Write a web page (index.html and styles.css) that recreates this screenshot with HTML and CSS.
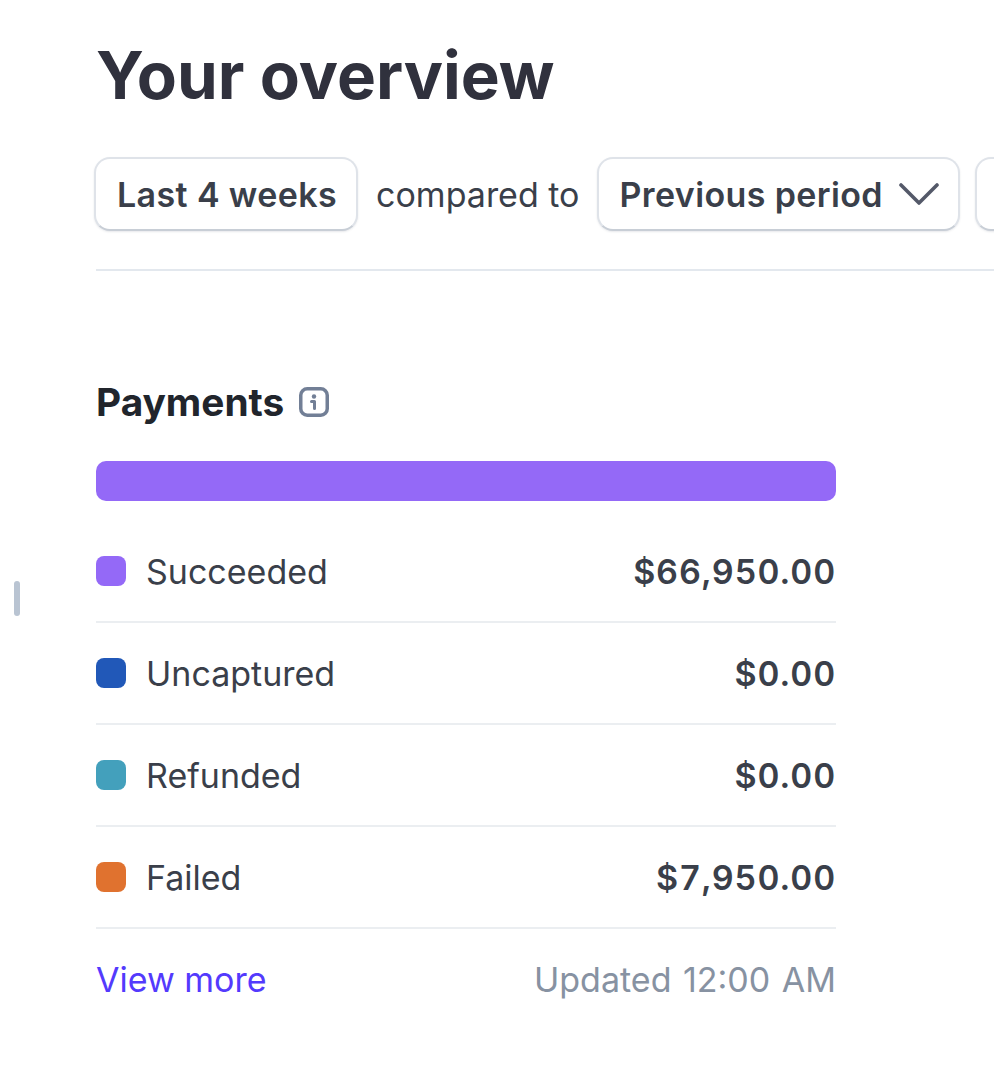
FILE: index.html
```html
<!DOCTYPE html>
<html lang="en">
<head>
<meta charset="utf-8">
<title>Your overview</title>
<link rel="stylesheet" href="styles.css">
</head>
<body>
<div class="handle"></div>
<main class="page">
  <h1 class="title">Your overview</h1>
  <div class="filters">
    <button class="pill">Last 4 weeks</button>
    <span class="compare">compared to</span>
    <button class="pill">Previous period
      <svg class="chev" width="40" height="24" viewBox="0 0 40 24" aria-hidden="true"><path d="M2 3 L20 21 L38 3" fill="none" stroke="#545969" stroke-width="3.6" stroke-linecap="round" stroke-linejoin="round"/></svg>
    </button>
    <div class="pill pill-cut"></div>
  </div>
  <section class="card">
    <h2 class="card-title">Payments
      <svg class="info" width="30" height="30" viewBox="0 0 30 30" aria-hidden="true"><rect x="1.75" y="1.75" width="26.5" height="26.5" rx="6.5" fill="none" stroke="#727f96" stroke-width="3.5"/><circle cx="15" cy="9.5" r="2.2" fill="#727f96"/><path d="M12.5 14.5 H15.5 V21.5" fill="none" stroke="#727f96" stroke-width="3" stroke-linecap="round" stroke-linejoin="round"/></svg>
    </h2>
    <div class="bar"></div>
    <ul class="rows">
      <li class="row"><span class="dot dot-purple"></span><span class="label">Succeeded</span><span class="amount">$66,950.00</span></li>
      <li class="row"><span class="dot dot-blue"></span><span class="label">Uncaptured</span><span class="amount">$0.00</span></li>
      <li class="row"><span class="dot dot-teal"></span><span class="label">Refunded</span><span class="amount">$0.00</span></li>
      <li class="row"><span class="dot dot-orange"></span><span class="label">Failed</span><span class="amount">$7,950.00</span></li>
    </ul>
    <div class="foot"><a class="more" href="#">View more</a><span class="updated">Updated 12:00 AM</span></div>
  </section>
</main>
</body>
</html>
```
FILE: styles.css
```css
* { box-sizing: border-box; }
html, body { margin: 0; height: 100%; background: #fff; overflow: hidden; }
body { font-family: Inter, "Liberation Sans", sans-serif; color: #3a3f4a; position: relative; }
.handle { position: absolute; left: 14px; top: 581px; width: 6px; height: 35px; border-radius: 3px; background: #b9c4d2; }
.page { padding: 38px 0 0 96px; }
.title { margin: 0; font-size: 65.5px; line-height: 76px; font-weight: 700; color: #30313d; }
.filters { display: flex; align-items: center; margin-top: 43px; padding-bottom: 38px; border-bottom: 2px solid #e3e8ee; white-space: nowrap; }
.pill { display: flex; align-items: center; gap: 16px; height: 74px; margin-left: -2px; padding: 0 19px 0 21px; background: #fff; border: 2px solid #dfe3e9; border-bottom-color: #c8ced6; border-radius: 16px; font: 600 34px Inter, sans-serif; letter-spacing: .38px; color: #3a3f4a; box-shadow: 0 1px 2px rgba(60,66,87,.12); flex: none; }
.compare { font-size: 34px; margin: 0 17px 0 18px; }
.pill + .compare + .pill { margin-left: 0; }
.pill-cut { margin-left: 15px; width: 60px; }
.chev { display: block; }
.card { width: 740px; margin-top: 109px; }
.card-title { display: flex; align-items: center; gap: 15px; margin: 0; font-size: 38.8px; line-height: 44px; font-weight: 700; color: #21252c; }
.bar { height: 40px; margin-top: 37px; background: #9469f7; border-radius: 10px; }
.rows { list-style: none; margin: 20px 0 0; padding: 0; }
.row { display: flex; align-items: center; height: 102px; border-bottom: 2px solid #ebeef1; font-size: 34px; }
.dot { width: 30px; height: 30px; border-radius: 8px; margin-right: 20px; flex: none; }
.dot-purple { background: #9469f7; }
.dot-blue { background: #2158b8; }
.dot-teal { background: #43a0bc; }
.dot-orange { background: #e0722f; }
.label { flex: 1; }
.amount { font-weight: 600; font-variant-numeric: tabular-nums; letter-spacing: .85px; }
.foot { display: flex; justify-content: space-between; align-items: center; height: 100px; font-size: 34px; }
.more { color: #533afd; text-decoration: none; }
.updated { color: #8792a2; word-spacing: 2px; }
```
